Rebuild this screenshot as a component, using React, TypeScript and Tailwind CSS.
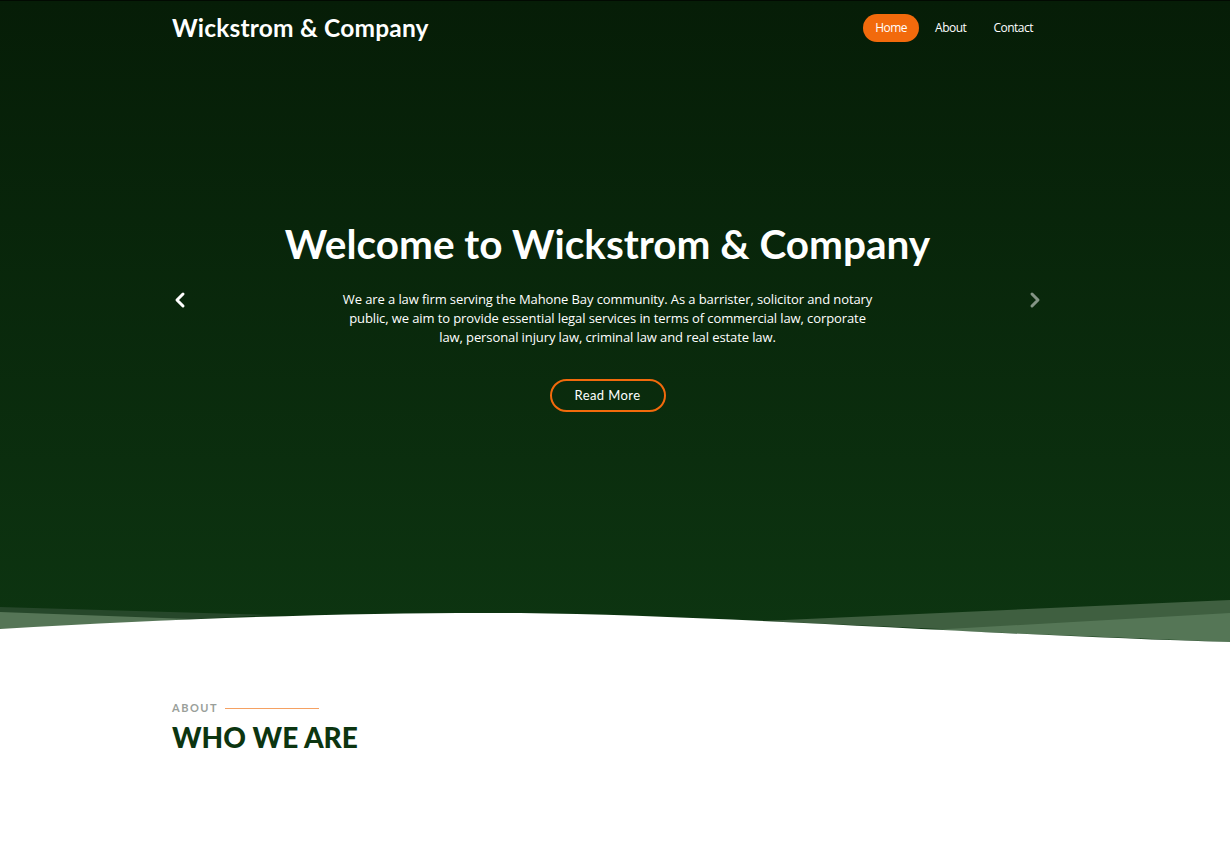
import { ChevronLeft, ChevronRight } from "lucide-react"

const heading = { fontFamily: "Lato, 'Noto Sans', sans-serif" }

function Wave() {
  return (
    <svg
      className="absolute bottom-0 left-0 h-[50px] w-full"
      viewBox="0 0 1230 50"
      preserveAspectRatio="none"
    >
      <path d="M0 15 L270 23 L0 38 Z" fill="#26472a" />
      <path d="M0 20 L190 27 L0 40 Z" fill="#557556" />
      <path d="M760 29 L1230 8 L1230 50 Z" fill="#3f5f40" />
      <path d="M930 38 L1230 21 L1230 50 Z" fill="#557656" />
      <path d="M0 37 C200 25 380 20 520 21 C720 23 1000 44 1230 50 L1230 50 L0 50 Z" fill="#ffffff" />
    </svg>
  )
}

export default function App() {
  return (
    <div className="min-h-[850px] bg-white" style={{ fontFamily: "'Open Sans', sans-serif" }}>
      {/* Hero */}
      <section className="relative h-[642px] border-t border-[#020a02] bg-gradient-to-b from-[#061d07] to-[#0d3511] pr-[15px]">
        <nav className="mx-auto flex w-[871px] items-center justify-between pt-[9px]">
          <span className="text-[24.5px] font-bold tracking-[0.2px] text-white" style={heading}>
            Wickstrom &amp; Company
          </span>
          <ul className="flex items-center pr-[10px] text-[12px] tracking-[-0.5px] text-white">
            <li className="rounded-full bg-[#f26a0c] px-[12px] py-[5px]">Home</li>
            <li className="ml-[16px] py-[5px]">About</li>
            <li className="ml-[27px] py-[5px]">Contact</li>
          </ul>
        </nav>

        <div className="mx-auto mt-[173px] flex w-[871px] flex-col items-center text-white">
          <h1 className="text-[40.5px] font-bold leading-[48px]" style={heading}>
            Welcome to Wickstrom &amp; Company
          </h1>
          <div className="mt-[22px] flex w-[879px] items-start justify-between">
            <ChevronLeft className="mt-[-2px] h-6 w-6 text-white" strokeWidth={3} />
            <p className="w-[530px] text-center text-[13px] leading-[19px] tracking-[-0.1px]">
              We are a law firm serving the Mahone Bay community. As a barrister, solicitor and notary
              public, we aim to provide essential legal services in terms of commercial law, corporate
              law, personal injury law, criminal law and real estate law.
            </p>
            <ChevronRight className="mt-[-2px] h-6 w-6 text-white/50" strokeWidth={3} />
          </div>
          <button
            className="mt-[32px] h-[33px] w-[116px] rounded-full border-2 border-[#f26a0c] text-[13px] font-normal tracking-[0.4px] text-white"
            style={heading}
          >
            Read More
          </button>
        </div>

        <Wave />
      </section>

      {/* About */}
      <section className="pr-[15px]">
        <div className="mx-auto w-[871px] pt-[58px]">
          <div className="flex items-center gap-[7px]">
            <span className="text-[11px] font-bold tracking-[1.5px] text-[#9a9f9a]" style={heading}>
              ABOUT
            </span>
            <span className="h-px w-[94px] bg-[#f5a162]" />
          </div>
          <h2 className="mt-[2px] text-[28px] font-black leading-[36px] text-[#0c3510]" style={heading}>
            WHO WE ARE
          </h2>
        </div>
      </section>
    </div>
  )
}
